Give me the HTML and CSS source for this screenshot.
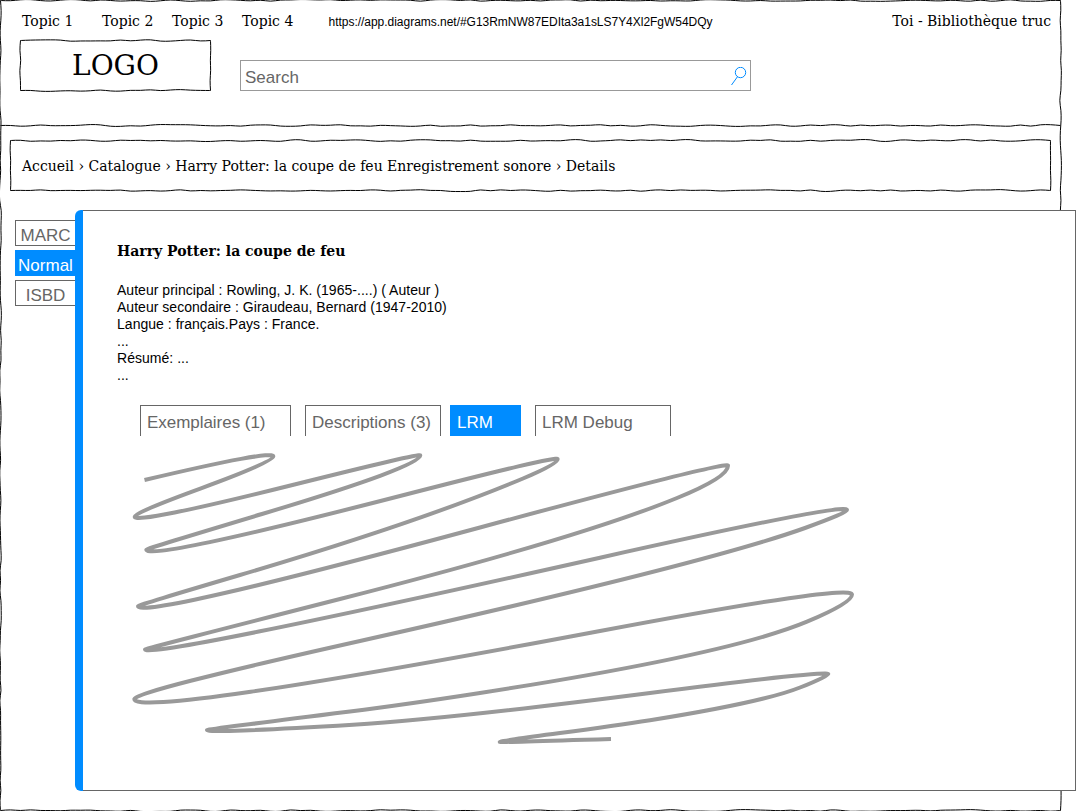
FILE: index.html
```html
<!DOCTYPE html>
<html lang="fr">
<head>
<meta charset="utf-8">
<title>Bibliothèque - Details</title>
<link rel="stylesheet" href="styles.css">
</head>
<body>
<div class="page">
  <div class="frame" data-sketch="box" data-seed="11"></div>
  <header class="header">
    <nav class="topbar">
      <a class="topic topic-first">Topic 1</a>
      <a class="topic">Topic 2</a>
      <a class="topic">Topic 3</a>
      <a class="topic topic-last">Topic 4</a>
      <span class="url">https://app.diagrams.net/#G13RmNW87EDIta3a1sLS7Y4Xl2FgW54DQy</span>
      <span class="account">Toi - Bibliothèque truc</span>
    </nav>
    <div class="brand">
      <div class="logo" data-sketch="box" data-seed="5">LOGO</div>
      <div class="search">
        <span>Search</span>
        <svg class="search-icon" width="16" height="19" viewBox="0 0 16 19"><circle cx="9.5" cy="5.5" r="5.2"/><path d="M6.5 9.7 L0.5 18"/></svg>
      </div>
    </div>
    <div class="divider" data-sketch="line" data-seed="23"></div>
  </header>
  <div class="breadcrumb" data-sketch="box" data-seed="37">Accueil › Catalogue › Harry Potter: la coupe de feu Enregistrement sonore › Details</div>
  <main class="main">
    <div class="side-tabs">
      <div class="side-tab">MARC</div>
      <div class="side-tab active">Normal</div>
      <div class="side-tab">ISBD</div>
    </div>
    <section class="panel">
      <div class="panel-body">
        <h1 class="title">Harry Potter: la coupe de feu</h1>
        <div class="notice">
          <div>Auteur principal : Rowling, J. K. (1965-....) ( Auteur )</div>
          <div>Auteur secondaire : Giraudeau, Bernard (1947-2010)</div>
          <div>Langue : français.Pays : France.</div>
          <div>...</div>
          <div>Résumé: ...</div>
          <div>...</div>
        </div>
        <div class="tabs">
          <div class="tab tab-copies">Exemplaires (1)</div>
          <div class="tab tab-desc">Descriptions (3)</div>
          <div class="tab tab-lrm active">LRM</div>
          <div class="tab tab-debug">LRM Debug</div>
        </div>
        <svg class="scribble" width="740" height="310" viewBox="125 445 740 310">
          <path id="scribble"/>
        </svg>
      </div>
    </section>
  </main>
</div>
<script src="sketch.js"></script>
</body>
</html>
```
FILE: styles.css
```css
* { box-sizing: border-box; }
body { margin: 0; background: #fff; color: #000; overflow: hidden; }
.page {
  position: relative;
  width: 1076px;
  height: 811px;
  overflow: hidden;
  font-family: "DejaVu Serif", serif;
  font-size: 14px;
}
.frame { position: absolute; left: 0; top: 0; width: 1061px; height: 811px; }
.sketch { position: absolute; left: 0; top: 0; overflow: visible; fill: none; stroke: #000; stroke-width: 1; }

.header { height: 126px; width: 1061px; display: flex; flex-direction: column; position: relative; }
.topbar { display: flex; height: 40px; padding: 0 10px 0 22px; line-height: 42px; white-space: nowrap; }
.topic { width: 70px; }
.topic-first { width: 80px; }
.topic-last { width: 86.5px; }
.url { font: 12px/44px "Liberation Sans", Arial, sans-serif; letter-spacing: -0.025px; }
.account { margin-left: auto; }
.brand { display: flex; height: 85px; padding-left: 20px; gap: 29px; }
.logo { position: relative; width: 191px; height: 51px; text-align: center; font-size: 28px; line-height: 52px; }
.search {
  display: flex; justify-content: space-between;
  width: 511px; height: 31px; margin-top: 20px; padding: 0 3px 0 4px;
  border: 1px solid #999; color: #666;
  font: 17px/34px "Liberation Sans", Arial, sans-serif;
}
.search-icon { margin-top: 6px; fill: none; stroke: #008cff; stroke-width: 1; }
.divider { position: relative; height: 1px; width: 1061px; }

.breadcrumb { position: relative; width: 1041px; height: 51px; margin: 14px 0 0 10px; padding-left: 12px; line-height: 52px; white-space: nowrap; }

.main { display: flex; margin-top: 19px; padding-left: 15px; position: relative; }
.side-tabs { display: flex; flex-direction: column; gap: 4px; width: 60px; padding-top: 10px; }
.side-tab {
  height: 26px; border: 1px solid #666; border-right: 0; color: #666; background: #fff;
  font: 17px/30px "Liberation Sans", Arial, sans-serif; text-align: center;
}
.side-tab.active { background: #008cff; border-color: #008cff; color: #fff; }
.panel { width: 1001px; height: 581px; background: #008cff; border-radius: 6px 0 0 6px; padding-left: 8px; }
.panel-body { height: 581px; background: #fff; border: 1px solid #666; border-left: 0; padding-left: 34px; }
.title { margin: 30px 0 0; font-size: 14px; line-height: 20px; }
.notice { margin-top: 21px; font: 14px/17px "Liberation Sans", Arial, sans-serif; letter-spacing: 0.027px; }
.tabs { display: flex; margin: 21px 0 0 23px; }
.tab {
  height: 31px; border: 1px solid #666; border-bottom: 0; padding-left: 6px; color: #666;
  font: 17px/33px "Liberation Sans", Arial, sans-serif; white-space: nowrap;
}
.tab.active { background: #008cff; border-color: #008cff; color: #fff; }
.tab-copies { width: 151px; margin-right: 14px; letter-spacing: -0.04px; }
.tab-desc { width: 136px; margin-right: 9px; }
.tab-lrm { width: 71px; margin-right: 14px; }
.tab-debug { width: 136px; }
.scribble { display: block; margin: 9px 0 0 8px; fill: none; stroke: #999; stroke-width: 4; }
```
FILE: sketch.js
```js
// Small deterministic generator so the hand-drawn lines stay stable.
function rng(seed) {
  let s = seed * 7919;
  return () => (s = (s * 16807) % 2147483647) / 2147483647;
}

// Wobbly stroke from (x1,y1) to (x2,y2), one bump about every 10px.
function wobble(x1, y1, x2, y2, rand) {
  const len = Math.hypot(x2 - x1, y2 - y1);
  const nx = -(y2 - y1) / len, ny = (x2 - x1) / len;
  const n = Math.max(1, Math.round(len / 10));
  let d = `M${x1} ${y1}`;
  let px = x1, py = y1;
  for (let i = 1; i <= n; i++) {
    const o = i === n ? 0 : (rand() - 0.5) * 2.2;
    const x = x1 + (x2 - x1) * i / n + nx * o;
    const y = y1 + (y2 - y1) * i / n + ny * o;
    d += ` Q${px.toFixed(2)} ${py.toFixed(2)} ${((px + x) / 2).toFixed(2)} ${((py + y) / 2).toFixed(2)}`;
    px = x; py = y;
  }
  return d + ` L${x2} ${y2}`;
}

document.querySelectorAll("[data-sketch]").forEach(el => {
  const w = el.offsetWidth - 0.5, h = el.offsetHeight - 0.5;
  const rand = rng(+el.dataset.seed);
  const d = el.dataset.sketch === "line"
    ? wobble(0.5, 0.5, w, 0.5, rand)
    : wobble(0.5, 0.5, w, 0.5, rand) + wobble(w, 0.5, w, h, rand) +
      wobble(w, h, 0.5, h, rand) + wobble(0.5, h, 0.5, 0.5, rand);
  const svg = document.createElementNS("http://www.w3.org/2000/svg", "svg");
  svg.setAttribute("class", "sketch");
  svg.setAttribute("width", el.offsetWidth);
  svg.setAttribute("height", el.offsetHeight);
  const path = document.createElementNS("http://www.w3.org/2000/svg", "path");
  path.setAttribute("d", d);
  svg.appendChild(path);
  el.appendChild(svg);
});

// Scribble. Turning points (no slope) have a vertical tangent;
// the points between them are [x, y, slope].
const pts = [
  [144.5, 480, -0.237], [273.3, 456.5],
  [201, 488.3, -0.365], [134.7, 516.7],
  [294.5, 484.5, -0.25], [420.3, 455.3],
  [262, 514, -0.3], [146.3, 549.5],
  [400, 496, -0.258], [557.7, 459],
  [523, 478.5, -0.42], [240, 575, -0.295], [138, 606],
  [480, 527.5, -0.27], [728, 465.7],
  [677, 498, -0.41], [340, 599, -0.255], [145, 649.3],
  [600, 557.7, -0.224], [847, 510],
  [805, 528, -0.36], [360, 641, -0.224], [134.3, 699],
  [600, 631, -0.188], [852, 594.5],
  [807, 621.7, -0.42], [480, 693, -0.155], [350, 711.5, -0.125], [207, 730],
  [353, 724.7, -0.06], [650, 693, -0.128], [828.3, 673.9],
  [800, 687.5, -0.4], [650, 720.3, -0.16], [560, 733, -0.13], [499.7, 742],
  [611, 739, -0.03]
];
let curve = `M${pts[0][0]} ${pts[0][1]}`;
for (let i = 1; i < pts.length; i++) {
  const [ax, ay, as] = pts[i - 1], [bx, by, bs] = pts[i];
  let cx, cy;
  if (as === undefined) { cx = ax; cy = by + bs * (cx - bx); }
  else if (bs === undefined) { cx = bx; cy = ay + as * (cx - ax); }
  else { cx = (by - ay + as * ax - bs * bx) / (as - bs); cy = ay + as * (cx - ax); }
  curve += ` Q${cx.toFixed(2)} ${cy.toFixed(2)} ${bx} ${by}`;
}
document.getElementById("scribble").setAttribute("d", curve);
```
